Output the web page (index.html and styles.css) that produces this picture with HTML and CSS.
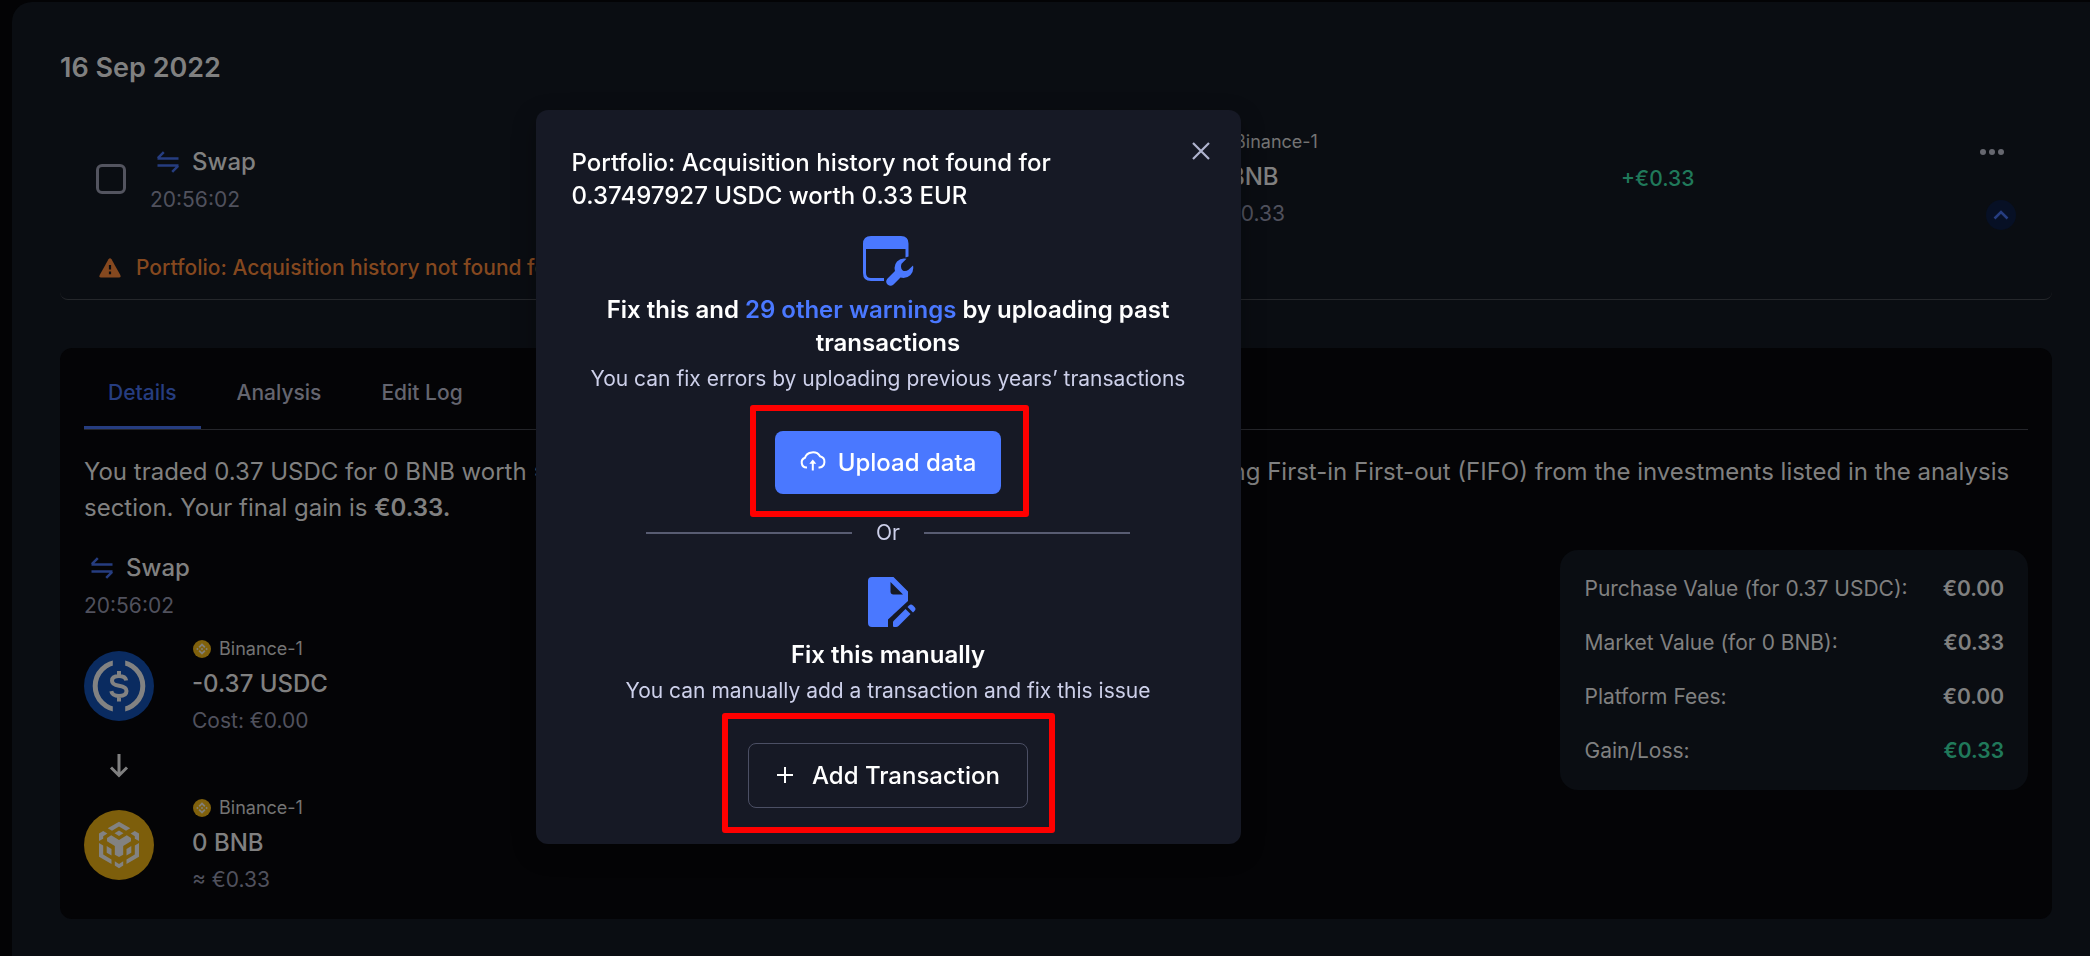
FILE: index.html
```html
<!DOCTYPE html>
<html lang="en">
<head>
<meta charset="utf-8">
<meta name="viewport" content="width=device-width, initial-scale=1">
<title>Transactions</title>
<link rel="stylesheet" href="styles.css">
</head>
<body>
<svg class="sprite" aria-hidden="true">
  <symbol id="swap" viewBox="0 0 24 24"><path d="M1.500 8.500h21M1.800 8.200l6-6M1.500 15.500h21M22.200 15.800l-6 6" fill="none" stroke="currentColor" stroke-width="2.500"/></symbol>
  <symbol id="binance" viewBox="0 0 18 18">
    <circle cx="9" cy="9" r="9" fill="#80610c"/>
    <path d="M9 3.200l3.500 3.500-1.300 1.300L9 5.800 6.800 8 5.500 6.700zM9 14.800l3.500-3.500-1.300-1.300L9 12.200 6.800 10l-1.300 1.300zM9 7.700L10.300 9 9 10.300 7.700 9zM4.400 7.800L5.600 9l-1.200 1.200L3.200 9zM13.600 7.800L14.800 9l-1.200 1.200L12.400 9z" fill="#828079"/>
  </symbol>
</svg>

<main class="panel">
  <h1 class="date">16 Sep 2022</h1>

  <section class="entry">
    <div class="entry-grid">
      <input class="check" type="checkbox" aria-label="Select transaction">
      <div class="kind">
        <div class="kind-name"><svg class="swap-icon"><use href="#swap"/></svg><span>Swap</span></div>
        <div class="muted">20:56:02</div>
      </div>
      <div class="asset">
        <div class="wallet"><svg class="wallet-icon"><use href="#binance"/></svg><span>Binance-1</span></div>
        <div class="amount">0 BNB</div>
        <div class="muted">≈ €0.33</div>
      </div>
      <div class="gain">+€0.33</div>
      <div class="actions">
        <button class="more" type="button" aria-label="More"><svg width="24" height="24" viewBox="0 0 24 24"><g fill="#66676f"><circle cx="3" cy="12" r="3"/><circle cx="12" cy="12" r="3"/><circle cx="21" cy="12" r="3"/></g></svg></button>
        <button class="collapse" type="button" aria-label="Collapse"><svg width="30" height="30" viewBox="0 0 30 30"><path d="M8.500 18.500l6.500-6.500 6.500 6.500" fill="none" stroke="#263d80" stroke-width="2.500"/></svg></button>
      </div>
    </div>
    <p class="warning">
      <svg width="22" height="20" viewBox="0 0 22 20"><path d="M9.500 1.200q1.500-2 3 0l8.800 15.800q.9 2.500-1.300 2.500H2q-2.200 0-1.300-2.500z" fill="#85481f"/><path d="M11 7v4.500M11 13.500v2.700" stroke="#0a0d12" stroke-width="2.200"/></svg>
      <span>Portfolio: Acquisition history not found for 0.37497927 USDC</span>
    </p>
  </section>

  <section class="details">
    <nav class="tabs">
      <button class="tab active" type="button">Details</button>
      <button class="tab" type="button">Analysis</button>
      <button class="tab" type="button">Edit Log</button>
    </nav>
    <p class="summary-text">You traded 0.37 USDC for 0 BNB worth ≈ €0.33. The cost basis of 0.37 USDC sold was calculated using First-in First-out (FIFO) from the investments listed in the analysis section. Your final gain is <strong>€0.33.</strong></p>
    <div class="details-body">
      <div class="trade">
        <div class="kind">
          <div class="kind-name"><svg class="swap-icon"><use href="#swap"/></svg><span>Swap</span></div>
          <div class="muted">20:56:02</div>
        </div>
        <div class="leg">
          <svg class="coin" viewBox="0 0 70 70">
            <circle cx="35" cy="35" r="35" fill="#0a2b60"/>
            <circle cx="35" cy="35" r="23.800" fill="none" stroke="#828282" stroke-width="5"/>
            <path d="M28.800 7h12.400v56H28.800z" fill="#0a2b60"/>
            <path d="M42.200 29.500q-.8-4.500-7.200-4.500-7 0-7 4.800 0 4 7 5 7.500 1 7.500 5.200 0 5-7.500 5-6.800 0-7.700-4.800M35 20v5M35 45v5.500" fill="none" stroke="#828282" stroke-width="4"/>
          </svg>
          <div class="asset">
            <div class="wallet"><svg class="wallet-icon"><use href="#binance"/></svg><span>Binance-1</span></div>
            <div class="amount">-0.37 USDC</div>
            <div class="muted">Cost: €0.00</div>
          </div>
        </div>
        <div class="arrow"><svg width="20" height="24" viewBox="0 0 20 24"><path d="M10 0v21.500M2 13.500l8 8 8-8" fill="none" stroke="#808080" stroke-width="3"/></svg></div>
        <div class="leg">
          <svg class="coin" viewBox="0 0 70 70">
            <circle cx="35" cy="35" r="35" fill="#7d5e0b"/>
            <g fill="#828282">
              <path d="M35 11.700l11.300 6.500-4.300 2.600-7-4.300-7 4.300-4.300-2.600z"/>
              <path d="M35 20.500l4.500 2.700-4.500 2.800-4.500-2.800z"/>
              <path d="M15 23.500l4.200-2.500 4.200 2.500-4.200 2.700v2.500L15 31zM55 23.500L50.800 21l-4.200 2.500 4.200 2.700v2.500L55 31z"/>
              <path d="M23 28l4.200-2.700 7.800 4.700 7.800-4.700L47 28v3.200L39.200 36v8.700L35 47l-4.200-2.300V36L23 31.200z"/>
              <path d="M15 33l4.200 2.600v8.900l8.300 5v4.500L15 46.700zM55 33l-4.200 2.600v8.900l-8.300 5v4.500L55 46.700z"/>
              <path d="M22.700 36l4.800 3v6.500l-4.800-2.800zM47.300 36l-4.800 3v6.500l4.800-2.800z"/>
              <path d="M30.800 51.300l4.200 2.600 4.200-2.600v4.300L35 58.300l-4.200-2.700z"/>
            </g>
          </svg>
          <div class="asset">
            <div class="wallet"><svg class="wallet-icon"><use href="#binance"/></svg><span>Binance-1</span></div>
            <div class="amount">0 BNB</div>
            <div class="muted">≈ €0.33</div>
          </div>
        </div>
      </div>
      <dl class="totals">
        <dt>Purchase Value (for 0.37 USDC):</dt><dd>€0.00</dd>
        <dt>Market Value (for 0 BNB):</dt><dd>€0.33</dd>
        <dt>Platform Fees:</dt><dd>€0.00</dd>
        <dt>Gain/Loss:</dt><dd class="positive">€0.33</dd>
      </dl>
    </div>
  </section>
</main>

<div class="overlay">
  <div class="modal" role="dialog" aria-modal="true" aria-labelledby="modal-title">
    <button class="close" type="button" aria-label="Close"><svg width="18" height="18" viewBox="0 0 18 18"><path d="M1 1l16 16M17 1L1 17" stroke="#b0b4cf" stroke-width="2.200"/></svg></button>
    <h2 class="modal-title" id="modal-title">Portfolio: Acquisition history not found for 0.37497927 USDC worth 0.33 EUR</h2>
    <svg class="window-icon" width="50" height="50" viewBox="0 0 50 50" overflow="visible">
      <path d="M8 0h30q7.500 0 7.500 7.500V20.500l-3 1V13H3v24q0 5 5 5h13v3H8q-8 0-8-8V8q0-8 8-8z" fill="#4a78ff"/>
      <path d="M24.300 42.800L32 35q-1.500-5.500 2-9.500 4-4 9.500-2.800l-5 5q-1.500 5 1.500 7 3 1 5.500-1l4.500-4.200q1.200 5-2.500 9.500-4 4-10 2.600l-7 7q-2.800 2.400-5.700.200-3-2.800-.5-6z" fill="#4a78ff"/>
    </svg>
    <h3 class="option-title">Fix this and <a class="link" href="#">29 other warnings</a> by uploading past transactions</h3>
    <p class="option-text">You can fix errors by uploading previous years’ transactions</p>
    <div class="highlight upload">
      <button class="btn primary" type="button"><svg width="26" height="24" viewBox="0 0 26 24"><path d="M7 17.500H6.500A5 5 0 0 1 5 7.800 8 7 0 0 1 20 6.300a5.700 5.700 0 0 1-.5 11.200H18.500M12.800 20.500V11" fill="none" stroke="#fff" stroke-width="2"/><path d="M9.300 13.800l3.500-4.300 3.500 4.300z" fill="#fff"/></svg>Upload data</button>
    </div>
    <div class="divider"><span>Or</span></div>
    <svg class="file-icon" width="56" height="50" viewBox="-8 0 56 50">
      <path d="M4 0h21.500L40 14.500V24L20 42.500V50H4q-4 0-4-4V4q0-4 4-4z" fill="#4a78ff"/>
      <path d="M22.500 5l12.500 12.500H25.500q-3 0-3-3z" fill="#161925"/>
      <path d="M25 44.500L37.500 32l5 5L30.500 49q-1 1-2.500 1h-2q-1 0-1-1z" fill="#4a78ff"/>
      <path d="M39.500 30l1.500-1.500q2-2 4 0l1.500 1.500q2 2 0 4L45 35.500z" fill="#4a78ff"/>
    </svg>
    <h3 class="option-title">Fix this manually</h3>
    <p class="option-text">You can manually add a transaction and fix this issue</p>
    <div class="highlight add">
      <button class="btn outline" type="button"><svg width="18" height="18" viewBox="0 0 18 18"><path d="M9 1v16M1 9h16" stroke="#fff" stroke-width="2"/></svg>Add Transaction</button>
    </div>
  </div>
</div>
</body>
</html>
```
FILE: styles.css
```css
* { box-sizing: border-box; }

body {
  margin: 0;
  padding: 2px 0 0 12px;
  min-height: 100vh;
  background: #030305;
  color: #808080;
  font-family: Inter, "Liberation Sans", sans-serif;
  font-size: 21px;
  line-height: 30px;
  display: flex;
  flex-direction: column;
  overflow: hidden;
}

h1, h2, h3, p, dl, dd { margin: 0; }

button {
  font: inherit;
  color: inherit;
  background: none;
  border: 0;
  padding: 0;
}

svg { display: block; flex: none; }
.sprite { position: absolute; width: 0; height: 0; }

.panel {
  flex: 1;
  padding: 48px 38px 36px 48px;
  background: #0a0d12;
  border-radius: 20px 0 0 0;
}

.date { font-size: 27px; line-height: 36px; font-weight: 600; }

.entry {
  padding: 42px 36px 16px;
  border-bottom: 1px solid #25272b;
  border-radius: 8px;
}

.entry-grid {
  display: grid;
  grid-template-columns: 30px 1081fr 414fr 359fr 36px;
  align-items: center;
}

.check {
  appearance: none;
  width: 30px;
  height: 30px;
  margin: 0;
  border: 3px solid #53545f;
  border-radius: 6px;
}

.entry .kind { padding-left: 24px; }
.kind { display: flex; flex-direction: column; gap: 5px; }

.kind-name {
  display: flex;
  align-items: center;
  gap: 12px;
  padding-left: 6px;
  font-size: 24px;
  line-height: 36px;
  font-weight: 500;
}

.swap-icon { width: 24px; height: 24px; color: #263d80; }
.muted { color: #50515d; }

.asset { display: flex; flex-direction: column; gap: 4px; }
.wallet { display: flex; align-items: center; gap: 8px; padding-left: 1px; font-size: 18px; line-height: 26px; color: #747474; }
.wallet-icon { width: 18px; height: 18px; }
.amount { font-size: 24px; line-height: 36px; font-weight: 500; }

.gain { color: #20795a; font-weight: 500; }

.actions {
  display: flex;
  flex-direction: column;
  gap: 36px;
  padding-top: 12px;
}

.more { width: 24px; height: 24px; }
.collapse { width: 30px; height: 30px; align-self: flex-end; border-radius: 50%; background: #071025; }

.warning {
  display: flex;
  align-items: center;
  gap: 15px;
  margin-top: 23px;
  padding-left: 3px;
  color: #85481f;
  font-weight: 500;
}

.details {
  margin-top: 48px;
  padding: 0 24px 24px;
  border-radius: 12px;
  background: #040406;
}

.tabs { display: flex; gap: 12px; border-bottom: 1px solid #25262b; }
.tab { padding: 30px 24px 18px; border-bottom: 3px solid transparent; color: #64656f; font-weight: 500; }
.tab.active { color: #263d80; border-color: #263d80; }

.summary-text { margin-top: 24px; font-size: 24px; line-height: 36px; }
.summary-text strong { font-weight: 600; }

.details-body {
  display: flex;
  justify-content: space-between;
  align-items: flex-start;
  margin-top: 24px;
}

.trade .kind { margin-bottom: 15px; }
.leg { display: flex; align-items: center; gap: 38px; }
.coin { width: 70px; height: 70px; }
.arrow { display: flex; align-items: center; justify-content: center; width: 70px; height: 59px; }

.totals {
  display: grid;
  grid-template-columns: auto auto;
  gap: 24px 35px;
  padding: 24px;
  border-radius: 18px;
  background: #0a0d12;
}

.totals dd { text-align: right; font-weight: 600; }
.totals .positive { color: #20795a; }

.overlay {
  position: fixed;
  inset: 0;
  display: flex;
  align-items: center;
  justify-content: center;
  padding: 0 314px 3px 0;
}

.modal {
  position: relative;
  display: flex;
  flex-direction: column;
  align-items: center;
  width: 705px;
  padding: 36px;
  border-radius: 12px;
  background: #161925;
  color: #fff;
  box-shadow: 0 8px 24px rgba(0, 0, 0, 0.3);
}

.close { position: absolute; top: 32px; right: 31px; width: 18px; height: 18px; }

.modal-title {
  align-self: stretch;
  padding-right: 96px;
  font-size: 24px;
  line-height: 33px;
  font-weight: 500;
}

.window-icon { margin-top: 24px; }
.option-title { margin-top: 7px; font-size: 24px; line-height: 33px; font-weight: 600; text-align: center; }
.file-icon + .option-title { margin-top: 11px; }
.link { color: #4a78ff; text-decoration: none; }
.option-text { margin-top: 5px; color: #cdd0ea; text-align: center; }

.highlight { position: relative; margin-top: 37px; }
.highlight::after { content: ""; position: absolute; border: 6px solid #fe0000; border-radius: 3px; pointer-events: none; }
.upload::after { inset: -26px -28px -23px -25px; }
.add::after { inset: -30px -27px -25px -26px; }

.btn {
  display: flex;
  align-items: center;
  gap: 12px;
  padding: 15px 25px;
  border-radius: 8px;
  color: #fff;
  font-size: 24px;
  line-height: 33px;
  font-weight: 500;
}

.primary { background: #4a78ff; }
.outline { gap: 18px; border: 1px solid #4b4f64; padding: 15px 27px; }

.divider {
  display: flex;
  align-items: center;
  gap: 24px;
  width: 484px;
  margin: 24px 0 29px;
  color: #cdd0ea;
}

.divider::before, .divider::after { content: ""; flex: 1; height: 2px; background: #585c72; }
```
